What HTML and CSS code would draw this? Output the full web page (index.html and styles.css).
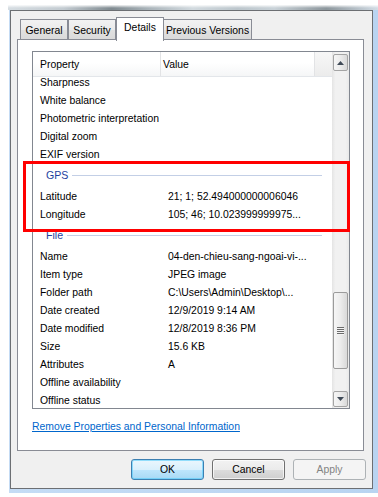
FILE: index.html
```html
<!DOCTYPE html>
<html>
<head>
<meta charset="utf-8">
<link rel="stylesheet" href="styles.css">
</head>
<body>
<div class="desk">
  <div class="glass"></div>
  <div class="aero">
    <div class="window">
      <div class="tabs">
        <div class="tab t-general">General</div>
        <div class="tab t-security">Security</div>
        <div class="tab sel t-details">Details</div>
        <div class="tab t-prev">Previous Versions</div>
      </div>
      <div class="panel">
        <div class="listbox">
          <div class="content">
            <div class="header">
              <div class="h-prop">Property</div>
              <div class="h-val">Value</div>
              <div class="h-rest"></div>
            </div>
            <div class="body">
              <div class="rows">
                <div class="row"><span class="p">Sharpness</span><span class="v"></span></div>
                <div class="row"><span class="p">White balance</span><span class="v"></span></div>
                <div class="row"><span class="p">Photometric interpretation</span><span class="v"></span></div>
                <div class="row"><span class="p">Digital zoom</span><span class="v"></span></div>
                <div class="row"><span class="p">EXIF version</span><span class="v"></span></div>
                <div class="group"><span class="g">GPS</span><span class="gline"></span></div>
                <div class="row"><span class="p">Latitude</span><span class="v">21; 1; 52.494000000006046</span></div>
                <div class="row"><span class="p">Longitude</span><span class="v">105; 46; 10.023999999975...</span></div>
                <div class="group"><span class="g">File</span><span class="gline"></span></div>
                <div class="row"><span class="p">Name</span><span class="v">04-den-chieu-sang-ngoai-vi-...</span></div>
                <div class="row"><span class="p">Item type</span><span class="v">JPEG image</span></div>
                <div class="row"><span class="p">Folder path</span><span class="v">C:\Users\Admin\Desktop\...</span></div>
                <div class="row"><span class="p">Date created</span><span class="v">12/9/2019 9:14 AM</span></div>
                <div class="row"><span class="p">Date modified</span><span class="v">12/8/2019 8:36 PM</span></div>
                <div class="row"><span class="p">Size</span><span class="v">15.6 KB</span></div>
                <div class="row"><span class="p">Attributes</span><span class="v">A</span></div>
                <div class="row"><span class="p">Offline availability</span><span class="v"></span></div>
                <div class="row"><span class="p">Offline status</span><span class="v"></span></div>
              </div>
            </div>
          </div>
          <div class="scrollbar">
            <div class="sbtn up"><svg width="7" height="4" viewBox="0 0 7 4"><polygon points="0,4 3.5,0 7,4" fill="#3f4a57"/></svg></div>
            <div class="track1"></div>
            <div class="thumb"><span class="grip"></span></div>
            <div class="track2"></div>
            <div class="sbtn down"><svg width="7" height="4" viewBox="0 0 7 4"><polygon points="0,0 7,0 3.5,4" fill="#3f4a57"/></svg></div>
          </div>
        </div>
        <a class="link" href="#">Remove Properties and Personal Information</a>
      </div>
      <div class="buttons">
        <div class="btn def">OK</div>
        <div class="btn">Cancel</div>
        <div class="btn dis">Apply</div>
      </div>
      <div class="redbox"></div>
    </div>
  </div>
</div>
</body>
</html>
```
FILE: styles.css
```css
* { box-sizing: border-box; }
html, body { margin: 0; padding: 0; background: #fff; }
body {
  font-family: "Liberation Sans", Arial, sans-serif;
  font-size: 10.4px;
  color: #000;
  width: 378px;
  height: 497px;
  overflow: hidden;
}
.desk { padding-top: 5px; }
.glass {
  height: 5px;
  margin-left: 8px;
  background:
    linear-gradient(180deg, rgba(255,255,255,0.9) 0%, rgba(255,255,255,0) 60%),
    linear-gradient(90deg, #d6dde2 0%, #c3cbd1 15%, #7f8a90 28%, #aab4ba 38%, #d2dadf 50%, #bcc6cc 62%, #c9d2d8 72%, #8c969c 86%, #d3dde6 100%);
}
.aero {
  margin-left: 9px;
  width: 369px;
  padding: 0 5px 4px 1px;
  background: linear-gradient(90deg, #c5dcf5, #b9d4f1);
}
.window {
  position: relative;
  width: 363px;
  height: 479px;
  border: 1px solid #6c6f73;
  background: #f0f0f0;
}
.tabs {
  display: flex;
  align-items: flex-end;
  height: 22px;
  margin: 6px 0 0 9px;
}
.tab {
  height: 20px;
  border: 1px solid #898c95;
  border-bottom: none;
  background: linear-gradient(180deg, #f2f2f2 0%, #ebebeb 50%, #e1e1e1 51%, #dadada 100%);
  display: flex;
  align-items: center;
  justify-content: center;
  padding-top: 1px;
  font-size: 10.4px;
}
.t-general { width: 48px; }
.t-security { width: 48px; }
.t-details { width: 48px; }
.t-prev { width: 89px; margin-left: -1px; }
.tab.sel {
  position: relative;
  z-index: 2;
  height: 24px;
  margin-bottom: -2px;
  background: #fff;
  padding-top: 0;
  padding-bottom: 4px;
}
.panel {
  position: relative;
  z-index: 1;
  margin-left: 6px;
  width: 347px;
  height: 412px;
  border: 1px solid #898c95;
  background: #fff;
  padding: 11px 0 0 14px;
}
.listbox {
  display: flex;
  width: 318px;
  height: 358px;
  border: 1px solid #828790;
  background: #fff;
}
.content { width: 299px; display: flex; flex-direction: column; }
.header {
  display: flex;
  height: 25px;
  border-bottom: 1px solid #e3e6ea;
  background: linear-gradient(180deg, #ffffff 0%, #ffffff 45%, #f5f6f7 100%);
}
.h-prop {
  width: 128px;
  padding-left: 7px;
  border-right: 1px solid #e2e3e5;
  display: flex; align-items: center;
}
.h-val {
  width: 154px;
  padding-left: 2px;
  border-right: 1px solid #e2e3e5;
  display: flex; align-items: center;
}
.h-rest { flex: 1; background: linear-gradient(180deg, #f7f7f7, #ececec); }
.body { height: 331px; overflow: hidden; }
.rows { margin-top: -4px; }
.row { display: flex; align-items: center; height: 18px; white-space: nowrap; }
.p { width: 135px; padding-left: 7px; flex: none; }
.v { flex: 1; }
.group {
  display: flex;
  align-items: center;
  height: 24px;
  padding: 0 10px 0 13px;
  gap: 4px;
}
.g { color: #1e3f9e; font-size: 10.6px; }
.gline { flex: 1; height: 1px; background: #c3cfe6; }
.scrollbar {
  width: 17px;
  display: flex;
  flex-direction: column;
  background: linear-gradient(90deg, #e4e4e4 0%, #f1f1f1 20%, #f1f1f1 80%, #e9e9e9 100%);
}
.sbtn {
  width: 15px;
  margin: 0 1px;
  border: 1px solid #a4a4a4;
  border-radius: 2px;
  background: linear-gradient(90deg, #f6f6f6 0%, #eaeaea 55%, #d9d9d9 100%);
  display: flex; align-items: center; justify-content: center;
}
.sbtn.up { margin-top: 2px; height: 17px; }
.sbtn.down { height: 16px; }
.track1 { height: 221px; }
.thumb {
  width: 15px;
  margin: 0 1px;
  height: 77px;
  border: 1px solid #9b9b9b;
  border-radius: 2px;
  background: linear-gradient(90deg, #f6f6f6 0%, #ececec 50%, #d9d9d9 100%);
  display: flex; align-items: center; justify-content: center;
}
.grip {
  width: 7px;
  height: 8px;
  background: repeating-linear-gradient(180deg, #6a6a6a 0, #6a6a6a 1px, #f4f4f4 1px, #f4f4f4 2px);
}
.track2 { height: 22px; }
.link {
  display: inline-block;
  margin-top: 12px;
  color: #0066cc;
  text-decoration: underline;
  line-height: 12px;
}
.buttons {
  display: flex;
  justify-content: flex-end;
  gap: 8px;
  margin-top: 8px;
  padding-right: 6px;
}
.btn {
  width: 73px;
  height: 21px;
  border: 1px solid #707070;
  border-radius: 3px;
  background: linear-gradient(180deg, #f2f2f2 0%, #ebebeb 50%, #dddddd 51%, #cfcfcf 100%);
  box-shadow: inset 0 0 0 1px rgba(255,255,255,0.7);
  display: flex; align-items: center; justify-content: center;
}
.btn.def {
  border-color: #3c7fb1;
  background: linear-gradient(180deg, #eaf6fd 0%, #d9f0fc 50%, #bee6fd 51%, #a7d9f5 100%);
  box-shadow: inset 0 0 0 1px rgba(72,200,250,0.55);
}
.btn.dis {
  border-color: #adb2b5;
  background: #f4f4f4;
  box-shadow: none;
  color: #838383;
}
.redbox {
  position: absolute;
  z-index: 5;
  left: 12px;
  top: 150px;
  width: 327px;
  height: 71px;
  border: 3px solid #f00;
}
```
